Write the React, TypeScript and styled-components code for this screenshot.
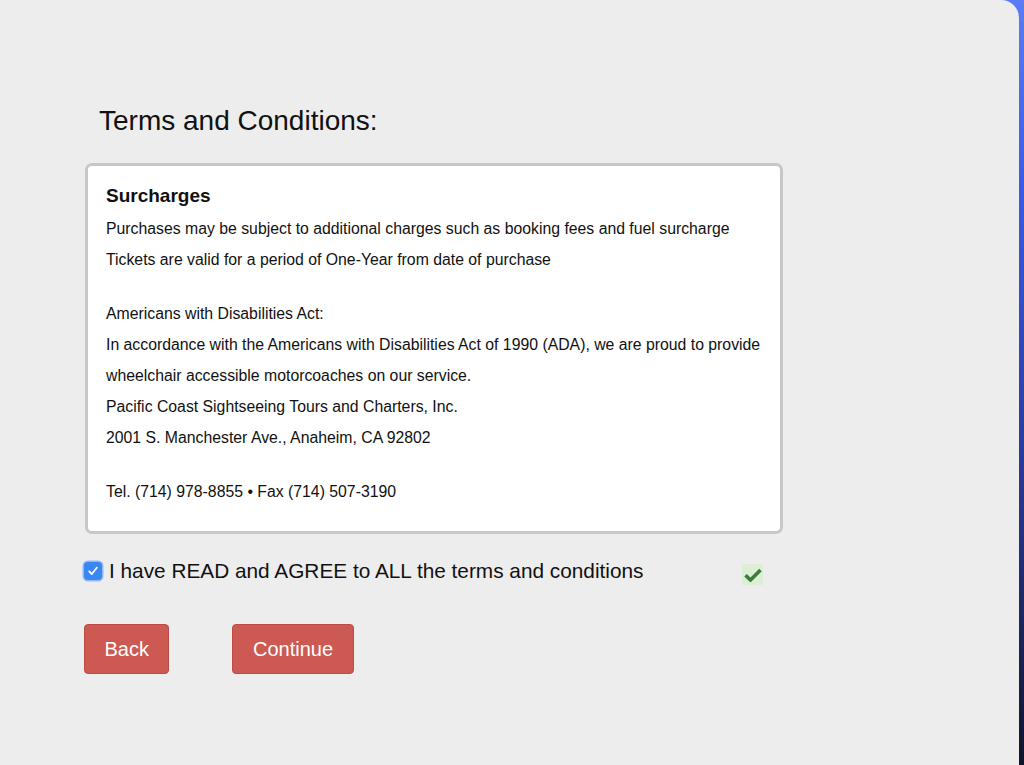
import React from "react";
import styled, { createGlobalStyle } from "styled-components";

const GlobalStyle = createGlobalStyle`
  html, body {
    margin: 0;
    padding: 0;
    height: 100%;
  }
  body {
    font-family: "Liberation Sans", Arial, sans-serif;
    background: linear-gradient(180deg, #5b7cf5 0%, #3a5ae6 25%, #2a3a9a 60%, #10142a 100%);
    overflow: hidden;
  }
`;

const termsLines = [
  "Purchases may be subject to additional charges such as booking fees and fuel surcharge",
  "Tickets are valid for a period of One-Year from date of purchase",
  null,
  "Americans with Disabilities Act:",
  "In accordance with the Americans with Disabilities Act of 1990 (ADA), we are proud to provide",
  "wheelchair accessible motorcoaches on our service.",
  "Pacific Coast Sightseeing Tours and Charters, Inc.",
  "2001 S. Manchester Ave., Anaheim, CA 92802",
  null,
  "Tel. (714) 978-8855 \u2022 Fax (714) 507-3190",
];

const App = () => {
  return (
    <>
      <GlobalStyle />
      <Panel>
        <Content>
          <Heading>Terms and Conditions:</Heading>
          <TermsBox>
            <BoxTitle>Surcharges</BoxTitle>
            {termsLines.map((line, index) =>
              line === null ? (
                <Spacer key={index} />
              ) : (
                <Line key={index}>{line}</Line>
              )
            )}
          </TermsBox>
          <AgreeRow>
            <CheckBox>
              <svg width="12" height="12" viewBox="0 0 12 12">
                <path
                  d="M2.2 6.4 L4.8 9 L9.8 2.8"
                  fill="none"
                  stroke="#fff"
                  strokeWidth="1.8"
                  strokeLinecap="round"
                  strokeLinejoin="round"
                />
              </svg>
            </CheckBox>
            <AgreeLabel>I have READ and AGREE to ALL the terms and conditions</AgreeLabel>
            <ValidMark>
              <svg width="18" height="14" viewBox="0 0 18 14">
                <path
                  d="M1.5 7.2 L6.5 12 L16.5 2"
                  fill="none"
                  stroke="#3d7d3a"
                  strokeWidth="3.6"
                  strokeLinejoin="miter"
                />
              </svg>
            </ValidMark>
          </AgreeRow>
          <Buttons>
            <Button>Back</Button>
            <Button>Continue</Button>
          </Buttons>
        </Content>
      </Panel>
    </>
  );
};

const Panel = styled.div`
  width: 1019px;
  height: 765px;
  background: #ededed;
  border-top-right-radius: 18px;
  box-sizing: border-box;
  padding: 105px 0 0 84px;
`;

const Content = styled.div`
  width: 699px;
  display: flex;
  flex-direction: column;
`;

const Heading = styled.h2`
  margin: 0 0 26px 15px;
  font-size: 28px;
  line-height: 32px;
  font-weight: 400;
  color: #111;
`;

const TermsBox = styled.div`
  margin-left: 1px;
  background: #fff;
  border: 3px solid #c7c7c7;
  border-radius: 7px;
  padding: 19px 18px 24px 18px;
  color: #111;
`;

const BoxTitle = styled.h4`
  margin: 0 0 6px 0;
  font-size: 19px;
  line-height: 22px;
  font-weight: 700;
`;

const Line = styled.div`
  font-size: 15.8px;
  line-height: 31px;
  white-space: nowrap;
`;

const Spacer = styled.div`
  height: 23px;
`;

const AgreeRow = styled.div`
  margin-top: 25px;
  height: 24px;
  display: flex;
  align-items: center;
`;

const CheckBox = styled.span`
  width: 18px;
  height: 18px;
  border-radius: 4px;
  background: #3b87f2;
  box-shadow: 0 0 0 1.5px #8fb8f5;
  display: flex;
  align-items: center;
  justify-content: center;
  flex-shrink: 0;
`;

const AgreeLabel = styled.span`
  margin-left: 7px;
  font-size: 20.8px;
  color: #111;
  white-space: nowrap;
`;

const ValidMark = styled.span`
  margin-left: auto;
  margin-right: 20px;
  margin-top: 7px;
  width: 21px;
  height: 21px;
  background: #dcefd6;
  display: flex;
  align-items: center;
  justify-content: center;
`;

const Buttons = styled.div`
  margin-top: 41px;
  display: flex;
  gap: 63px;
`;

const Button = styled.button`
  height: 50px;
  padding: 0 19.5px;
  background: #cc5a52;
  border: 1px solid #bd4b44;
  border-radius: 4px;
  color: #fff;
  font-family: "Liberation Sans", Arial, sans-serif;
  font-size: 20px;
  cursor: pointer;
`;

export default App;
